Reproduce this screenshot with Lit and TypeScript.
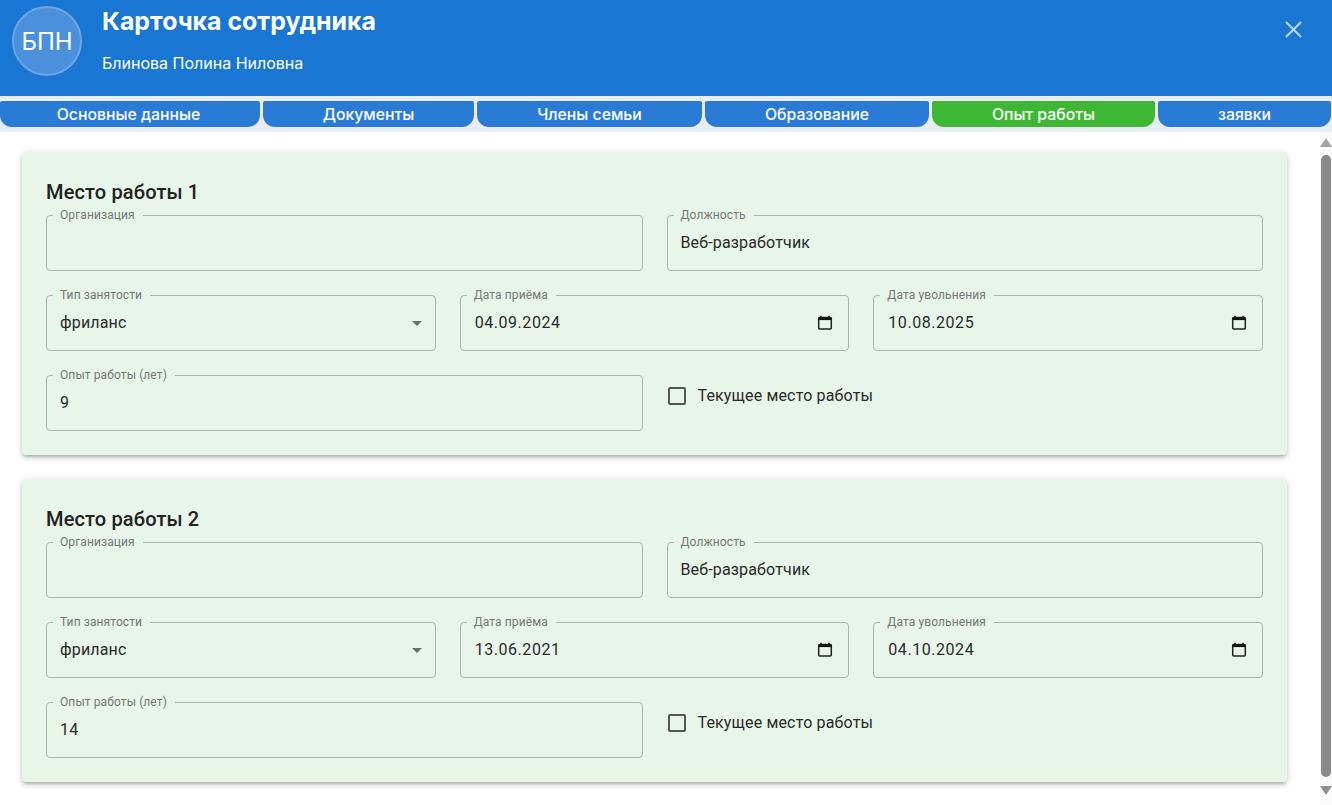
import { LitElement, html, css, svg } from "lit";
import { customElement } from "lit/decorators.js";

const TABS = ["Основные данные", "Документы", "Члены семьи", "Образование", "Опыт работы", "заявки"];
const JOBS = [
  { n: 1, hire: "04.09.2024", fire: "10.08.2025", years: "9" },
  { n: 2, hire: "13.06.2021", fire: "04.10.2024", years: "14" },
];

@customElement("app-root")
export class AppRoot extends LitElement {
  static styles = css`
    :host { display: block; height: 805px; overflow: hidden; font-family: Roboto, sans-serif; color: #1c1c1c; background: #fff; }
    .header { height: 96px; background: #1976d2; color: #fff; display: flex; padding: 6px 30px 0 12px; box-sizing: border-box; font-family: Inter, sans-serif; }
    .avatar { width: 70px; height: 70px; box-sizing: border-box; border-radius: 50%; background: #4a90dc; border: 2px solid #6fa6e3; display: flex; align-items: center; justify-content: center; font-size: 24px; flex: none; margin-right: 20px; font-weight: 400; }
    .titles { flex: 1; }
    h1 { margin: -1px 0 0; font-size: 24.9px; line-height: 32px; font-weight: 700; }
    .sub { font-size: 16px; font-weight: 400; line-height: 20px; margin-top: 16px; }
    .close { width: 17px; height: 17px; margin: 15px 0 0 0; flex: none; }
    .tabs { height: 36px; background: #eaedf0; display: flex; gap: 3px; padding: 5px 1px 5px 0; box-sizing: border-box; font-family: Inter, sans-serif; }
    .tab { height: 26px; flex: 1 1 0; background: #2a7bd6; color: #fff; border-radius: 0 0 12px 12px; font-size: 15.8px; font-weight: 500; line-height: 28px; text-align: center; border-top-left-radius: 2px; border-top-right-radius: 2px; box-sizing: border-box; }
    .tab.active { background: #3eb734; }
    .w0 { flex-grow: 260; text-indent: -3px; } .w1 { flex-grow: 211; } .w2 { flex-grow: 225; } .w3 { flex-grow: 224; } .w4 { flex-grow: 223; } .w5 { flex-grow: 173; }
    .body { height: 673px; display: flex; }
    .content { flex: 1; min-width: 0; padding: 20px 33px 0 22px; display: flex; flex-direction: column; gap: 24px; }
    .card { height: 303px; box-sizing: border-box; background: #e8f5e9; border-radius: 4px; padding: 28px 24px 0; box-shadow: 0 3px 3px -2px rgba(0,0,0,.2), 0 3px 4px 0 rgba(0,0,0,.14), 0 1px 8px 0 rgba(0,0,0,.12); }
    h2 { margin: 0 0 11px; font-size: 20px; line-height: 24px; font-weight: 500; color: #222; letter-spacing: .15px; }
    .row { display: grid; gap: 24px; margin-bottom: 24px; }
    .two { grid-template-columns: 1fr 1fr; }
    .three { grid-template-columns: 1fr 1fr 1fr; }
    .field { position: relative; height: 56px; box-sizing: border-box; border: 1px solid #a9b4ab; border-radius: 4px; padding: 0 13px 2px; display: flex; align-items: center; justify-content: space-between; font-size: 16px; letter-spacing: .15px; color: #2a2a2a; }
    .field label { position: absolute; left: 6px; top: -8px; padding: 0 8px 0 7px; background: #e8f5e9; font-size: 12px; line-height: 14px; color: #747874; letter-spacing: .1px; }
    .date { letter-spacing: .55px; margin-left: 1px; }
    .caret { width: 0; height: 0; border-left: 5px solid transparent; border-right: 5px solid transparent; border-top: 5px solid #6b6b6b; margin-top: 2px; }
    .cal { width: 16px; height: 16px; margin: 2px 2px 0 0; }
    .check { display: flex; align-items: flex-start; font-size: 16px; padding-top: 12px; gap: 12px; letter-spacing: .15px; line-height: 18px; color: #2a2a2a; }
    .box { width: 18px; height: 18px; box-sizing: border-box; border: 2px solid #555; border-radius: 2px; flex: none; margin-left: 1px; }
    .scroll { width: 12px; background: #fafafa; display: flex; flex-direction: column; align-items: center; flex: none; }
    .up { width: 0; height: 0; border-left: 6px solid transparent; border-right: 6px solid transparent; border-bottom: 9px solid #a3a3a3; margin-top: 6px; }
    .thumb { width: 10px; height: 622px; background: #8a8a8a; border-radius: 5px; margin: 8px 0 0; }
    .down { width: 0; height: 0; border-left: 6px solid transparent; border-right: 6px solid transparent; border-top: 9px solid #8f8f8f; margin-top: 9px; }
  `;

  private calendar() {
    return html`<svg class="cal" viewBox="0 0 16 16">${svg`<path d="M4 .8v2M12 .8v2" stroke="#111" stroke-width="1.5"/><rect x="1.7" y="2.5" width="12.6" height="11.6" rx="1" fill="none" stroke="#222" stroke-width="1.5"/><rect x="1.7" y="2.5" width="12.6" height="2.6" fill="#111"/>`}</svg>`;
  }

  private job(j: (typeof JOBS)[number]) {
    return html`<section class="card">
      <h2>Место работы ${j.n}</h2>
      <div class="row two">
        <div class="field"><label>Организация</label></div>
        <div class="field"><label>Должность</label><span>Веб-разработчик</span></div>
      </div>
      <div class="row three">
        <div class="field"><label>Тип занятости</label><span>фриланс</span><span class="caret"></span></div>
        <div class="field"><label>Дата приёма</label><span class="date">${j.hire}</span>${this.calendar()}</div>
        <div class="field"><label>Дата увольнения</label><span class="date">${j.fire}</span>${this.calendar()}</div>
      </div>
      <div class="row two">
        <div class="field"><label>Опыт работы (лет)</label><span>${j.years}</span></div>
        <div class="check"><span class="box"></span><span>Текущее место работы</span></div>
      </div>
    </section>`;
  }

  render() {
    return html`
      <header class="header">
        <div class="avatar">БПН</div>
        <div class="titles">
          <h1>Карточка сотрудника</h1>
          <div class="sub">Блинова Полина Ниловна</div>
        </div>
        <svg class="close" viewBox="0 0 18 18"><path d="M1 1l16 16M17 1L1 17" stroke="#bcd6f2" stroke-width="2.2" fill="none"/></svg>
      </header>
      <nav class="tabs">
        ${TABS.map((t, i) => html`<div class="tab w${i} ${i === 4 ? "active" : ""}">${t}</div>`)}
      </nav>
      <div class="body">
        <main class="content">${JOBS.map((j) => this.job(j))}</main>
        <div class="scroll"><span class="up"></span><span class="thumb"></span><span class="down"></span></div>
      </div>
    `;
  }
}
